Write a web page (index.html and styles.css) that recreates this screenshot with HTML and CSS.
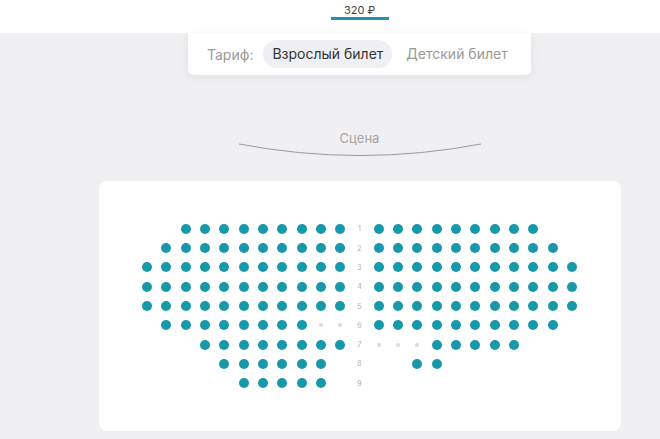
FILE: index.html
```html
<!DOCTYPE html>
<html lang="ru">
<head>
    <meta charset="UTF-8">
    <meta name="viewport" content="width=device-width, initial-scale=1.0">
    <title>Выбор мест</title>
    <link rel="stylesheet" href="styles.css">
</head>
<body>
    <header class="topbar">
        <div class="price-tab">320 ₽</div>
    </header>

    <main class="page">
        <div class="tariff">
            <span class="tariff-label">Тариф:</span>
            <span class="tariff-option active">Взрослый билет</span>
            <span class="tariff-option">Детский билет</span>
        </div>

        <div class="stage">
            <div class="stage-title">Сцена</div>
            <svg class="stage-line" width="244" height="16" viewBox="0 0 244 16">
                <path d="M1 2 Q122 25 243 2" fill="none" stroke="#9a9a9a" stroke-width="1"/>
            </svg>
        </div>

        <div class="hall">
            <div id="seats" class="seats"></div>
        </div>
    </main>

    <script>
        // o - свободно, x - занято, . - пусто
        const rows = [
            ['..ooooooooo', 'ooooooooo..'],
            ['.oooooooooo', 'oooooooooo.'],
            ['ooooooooooo', 'ooooooooooo'],
            ['ooooooooooo', 'ooooooooooo'],
            ['ooooooooooo', 'ooooooooooo'],
            ['.ooooooooxx', 'oooooooooo.'],
            ['...oooooooo', 'xxxooooo...'],
            ['....oooooo.', '..oo.......'],
            ['.....ooooo.', '...........']
        ];

        const seats = document.getElementById('seats');

        function addCell(ch) {
            const cell = document.createElement('div');
            cell.className = 'cell';
            if (ch === 'o') {
                const seat = document.createElement('span');
                seat.className = 'seat';
                cell.appendChild(seat);
            } else if (ch === 'x') {
                const seat = document.createElement('span');
                seat.className = 'seat taken';
                cell.appendChild(seat);
            }
            seats.appendChild(cell);
        }

        rows.forEach((row, i) => {
            row[0].split('').forEach(addCell);
            const num = document.createElement('div');
            num.className = 'cell row-num';
            num.textContent = i + 1;
            seats.appendChild(num);
            row[1].split('').forEach(addCell);
        });
    </script>
</body>
</html>
```

FILE: styles.css
```css
body {
    margin: 0;
    background-color: #f0f0f2;
    font-family: Inter, "Noto Sans", Arial, sans-serif;
    color: #333;
}

.topbar {
    height: 33px;
    background-color: #fff;
    display: flex;
    justify-content: center;
    padding-left: 59px;
}

.price-tab {
    width: 58px;
    height: 20px;
    box-sizing: border-box;
    padding-top: 4px;
    text-align: center;
    font-size: 11px;
    line-height: 13px;
    color: #444;
    border-bottom: 3px solid #1799aa;
}

.page {
    padding-left: 59px;
    display: flex;
    flex-direction: column;
    align-items: center;
}

.tariff {
    width: 343px;
    height: 42px;
    box-sizing: border-box;
    background-color: #fff;
    border-radius: 0 0 5px 5px;
    box-shadow: 0 2px 8px rgba(0,0,0,0.08);
    display: flex;
    align-items: center;
    padding-left: 19px;
    font-size: 14px;
}

.tariff-label {
    color: #9a9a9a;
    margin-right: 10px;
}

.tariff-option {
    color: #9a9a9a;
    padding: 0 9px;
    height: 28px;
    line-height: 28px;
    border-radius: 14px;
    margin-right: 5px;
}

.tariff-option.active {
    background-color: #eef0f4;
    color: #333;
}

.stage {
    margin-top: 55px;
    display: flex;
    flex-direction: column;
    align-items: center;
}

.stage-title {
    font-size: 13px;
    line-height: 16px;
    color: #a5a5a5;
}

.stage-line {
    display: block;
    margin-top: -4px;
}

.hall {
    margin-top: 23px;
    width: 522px;
    height: 250px;
    background-color: #fff;
    border-radius: 8px;
    display: flex;
    justify-content: center;
    align-items: center;
}

.seats {
    display: grid;
    grid-template-columns: repeat(23, 19.32px);
    grid-auto-rows: 19.32px;
}

.cell {
    display: flex;
    align-items: center;
    justify-content: center;
}

.seat {
    width: 10px;
    height: 10px;
    border-radius: 50%;
    background-color: #1799aa;
}

.seat.taken {
    width: 4px;
    height: 4px;
    background-color: #dcdcdc;
}

.row-num {
    font-size: 7px;
    color: #b0b0b0;
}
```
